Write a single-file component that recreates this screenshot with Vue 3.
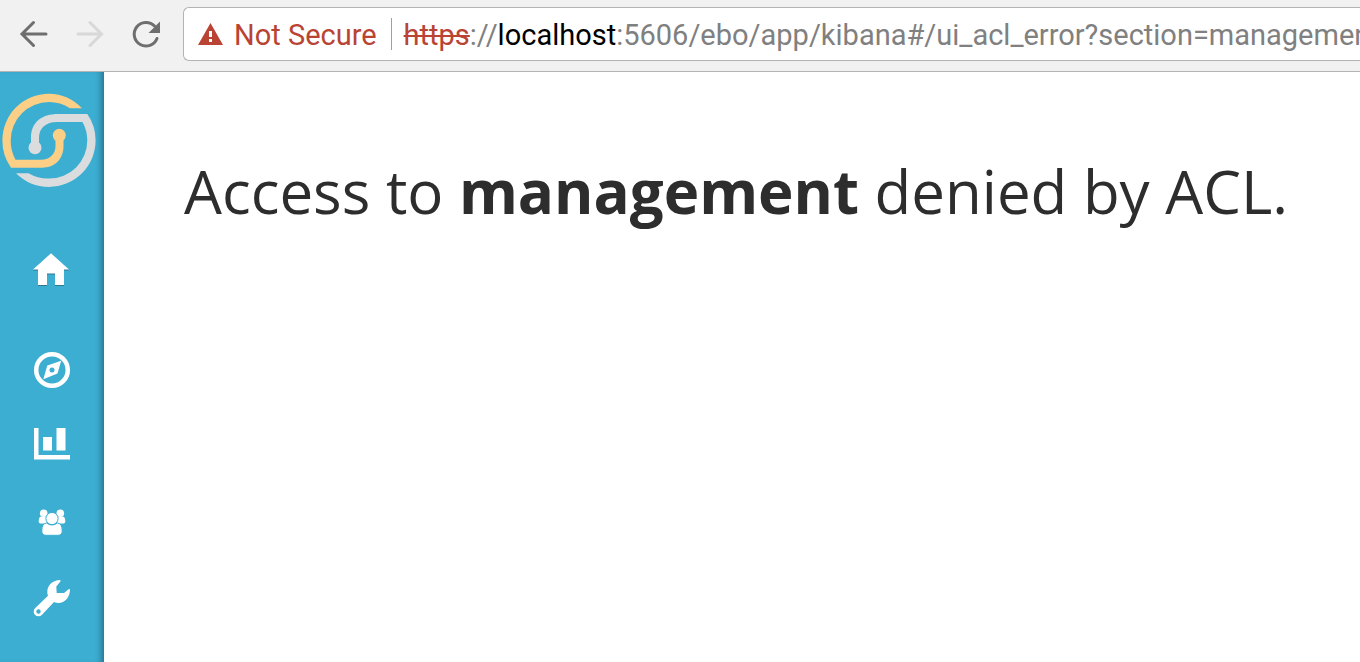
<script setup>
const urlParts = [
  { text: 'https', kind: 'scheme' },
  { text: '://', kind: 'rest' },
  { text: 'localhost', kind: 'host' },
  { text: ':5606/ebo/app/kibana#/ui_acl_error?section=management', kind: 'rest' },
]
const section = 'management'
</script>

<template>
  <div class="window">
    <header class="toolbar">
      <button class="tool" type="button" aria-label="Back">
        <svg viewBox="0 1 32 32"><path d="M15.500 5.500 4 17l11.500 11.500M5 17h23" /></svg>
      </button>
      <button class="tool" type="button" aria-label="Forward" disabled>
        <svg viewBox="0 1 32 32"><path d="M16 5.500 27.500 17 16 28.500M27 17H4" /></svg>
      </button>
      <button class="tool" type="button" aria-label="Reload">
        <svg viewBox="0 1 32 32">
          <path d="M27 21.500A11.800 11.800 0 1 1 24.500 9" />
          <path class="solid" d="M30 4.500v11.500H18.500z" />
        </svg>
      </button>
      <div class="address">
        <button class="security" type="button">
          <svg viewBox="0 0 26 24" aria-hidden="true">
            <path fill="#b94434" d="M12.500 1 25 23H0z" />
            <path fill="#fff" d="M11 9h3v6h-3zM11 17h3v3h-3z" />
          </svg>
          <span class="label">Not Secure</span>
        </button>
        <div class="url" role="textbox" aria-label="Address" contenteditable="true" spellcheck="false"><span v-for="part in urlParts" :key="part.text" :class="part.kind">{{ part.text }}</span></div>
      </div>
    </header>

    <div class="body">
      <nav class="sidebar" aria-label="Main">
        <a class="logo" href="#" aria-label="Start page">
          <svg viewBox="0 92 104 96">
            <path fill="#fccf87" d="M82 108.300A46.600 46.600 0 0 0 49 93.700 46.600 46.600 0 0 0 2.400 140.300 46.600 46.600 0 0 0 11 167.700H42C55 167.700 63.500 159 63.500 146V135H55.500V146C55.500 154 50 159.700 41 159.700H15.500A38.300 38.300 0 0 1 10.700 140.300 38.300 38.300 0 0 1 49 102 38.300 38.300 0 0 1 70 108.300Z" />
            <circle cx="59.300" cy="135.300" r="6.500" fill="#fccf87" />
            <path fill="#dadcdd" d="M16 173.300A46.600 46.600 0 0 0 49 186.900 46.600 46.600 0 0 0 95.600 140.300 46.600 46.600 0 0 0 87.300 114H58C42 114 31 122 31 138V148H39V138C39 128 46 122 57 122H82.500A38.300 38.300 0 0 1 87.300 140.300 38.300 38.300 0 0 1 49 178.600 38.300 38.300 0 0 1 28.500 173.300Z" />
            <circle cx="35" cy="147.700" r="6.500" fill="#dadcdd" />
          </svg>
        </a>
        <div class="group">
          <a class="item" href="#" aria-label="Home">
            <svg viewBox="-20 -20 40 40">
              <path fill="#33758d" d="M-1-15.800 17 .5H12V16H3V4.500H-5V16H-14V.5H-19z" />
              <path d="M-1-16.700 17-.5H12V15H3V3.500H-5V15H-14V-.5H-19z" />
            </svg>
          </a>
        </div>
        <div class="group">
          <a class="item" href="#" aria-label="Discover">
            <svg viewBox="-20 -20 40 40">
              <circle r="15.800" fill="none" stroke="#fff" stroke-width="4.500" />
              <path fill-rule="evenodd" d="M9.200-9.200 5.500 3.500-8.700 9.200-4.700-4.500zM0-2.500a2.500 2.500 0 1 0 0 5 2.500 2.500 0 0 0 0-5z" />
            </svg>
          </a>
          <a class="item" href="#" aria-label="Visualize">
            <svg viewBox="-20 -20 40 40">
              <path d="M-18-18h4.500V9H18v4.500h-36zM-9-9H0V4.500h-9zM4.500-18h9V4.500h-9z" />
            </svg>
          </a>
          <a class="item" href="#" aria-label="Users">
            <svg viewBox="-20 -20 40 40">
              <circle cx="-8.300" cy="-8.800" r="3.800" />
              <circle cx="8.300" cy="-8.800" r="3.800" />
              <path d="M-10.500-5.500h5.500v7h-5.500q-2.800 0-2.800-2 0-5 2.800-5zM10.500-5.500H5v7h5.500q2.800 0 2.800-2 0-5-2.800-5z" />
              <path class="outlined" d="M-5.500 1q5.500 4 11 0 4.700.5 4.700 8 0 4.300-4.200 4.300H-6q-4.200 0-4.200-4.300 0-7.500 4.700-8z" />
              <circle class="outlined" cy="-3.500" r="6.100" />
            </svg>
          </a>
          <a class="item" href="#" aria-label="Management">
            <svg viewBox="-20 -20 40 40">
              <path fill-rule="evenodd" d="M8-18Q9.500-17.600 8-16L4.300-11.500 4.700-5H12L16.500-8.800Q18-9.500 18-8C17.800-1 13 5 6.300 5Q4 5 2 4L-10 16.700Q-11.500 18.300-13.600 18.300A4.700 4.700 0 0 1-18.300 13.700Q-18.300 11.600-17 10.300L-4-2.300Q-4.700-4-4.700-6.300C-4.500-13 1-18 8-18zM-13.500 11.300a2.200 2.200 0 1 0 0 4.400 2.200 2.200 0 0 0 0-4.400z" />
            </svg>
          </a>
        </div>
      </nav>
      <main class="content">
        <h1>Access to <strong>{{ section }}</strong> denied by ACL.</h1>
      </main>
    </div>
  </div>
</template>

<style>
body {
  margin: 0;
  background: #fff;
}
</style>

<style scoped>
.window {
  display: flex;
  flex-direction: column;
  min-height: 100vh;
  overflow: hidden;
}
.toolbar {
  display: flex;
  align-items: center;
  gap: 24px;
  padding: 7px 0 10px 18px;
  background: #f1f1f1;
  border-bottom: 1px solid #b3b3b3;
}
.tool {
  flex: none;
  width: 32px;
  height: 32px;
  padding: 0;
  border: 0;
  background: none;
}
.tool svg {
  display: block;
  width: 32px;
  height: 32px;
  fill: none;
  stroke: #6e6e6e;
  stroke-width: 3;
  stroke-linecap: round;
}
.tool:disabled svg {
  stroke: #d8d8d8;
}
.tool .solid {
  fill: #6e6e6e;
  stroke: none;
}
.address {
  flex: 1;
  min-width: 0;
  display: flex;
  align-items: center;
  margin-left: -3px;
  height: 52px;
  overflow: hidden;
  padding-left: 14px;
  background: #fff;
  border: 1px solid #b3b3b3;
  border-right: 0;
  border-radius: 6px 0 0 6px;
  font: 29px/34px Roboto, "Liberation Sans", sans-serif;
}
.security {
  flex: none;
  display: flex;
  align-items: center;
  gap: 10px;
  height: 32px;
  padding: 0 14px 0 0;
  border: 0;
  border-right: 1px solid #a0a0a0;
  background: none;
  color: #b94434;
  font: inherit;
}
.security svg {
  width: 26px;
  height: 24px;
}
.label {
  padding-top: 2px;
}
.url {
  flex: none;
  padding: 2px 0 0 12px;
  white-space: nowrap;
  outline: 0;
}
.scheme {
  color: #b94434;
  text-decoration: line-through;
}
.host {
  color: #000;
}
.rest {
  color: #808080;
}
.body {
  flex: 1;
  display: flex;
}
.sidebar {
  flex: none;
  display: flex;
  flex-direction: column;
  gap: 24px;
  width: 104px;
  background: #3caed2;
  box-shadow: inset -7px 0 7px -5px rgba(0, 0, 0, 0.4);
}
.logo {
  display: flex;
  align-items: center;
  height: 136px;
}
.logo svg {
  width: 104px;
  height: 96px;
}
.item {
  display: flex;
  align-items: center;
  justify-content: center;
  height: 76px;
}
.item svg {
  width: 40px;
  height: 40px;
  fill: #fff;
}
.outlined {
  stroke: #3caed2;
  stroke-width: 1;
}
.content {
  flex: 1;
  padding: 77px 24px 24px 80px;
}
h1 {
  margin: 0;
  color: #2d2d2d;
  font: 400 60px/84px "Open Sans", "Noto Sans", sans-serif;
}
strong {
  font-weight: 700;
}
</style>
